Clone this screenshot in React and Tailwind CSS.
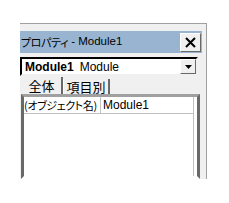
import React from "react";

const jp = "font-['Noto_Sans_CJK_JP','Noto_Sans',sans-serif]";
const lat = "font-['Liberation_Sans',sans-serif]";

export default function App() {
  return (
    <div className="w-[229px] h-[203px] bg-white pt-[23px] pl-[20px]">
      <div className="w-[187px] h-[156px] bg-[#f0f0f0] border-t border-r border-[#a0a0a0] flex flex-col">
        {/* title bar */}
        <div className="mt-[7px] h-[22px] bg-[#99b4d1] flex items-center mr-[4px]">
          <span className="whitespace-nowrap leading-none text-black pl-[1px] flex items-center">
            <span className={`${jp} text-[11px] [font-feature-settings:'palt'] tracking-[-0.4px]`}>プロパティ</span>
            <span className={`${lat} text-[11.5px] whitespace-pre`}> - Module1</span>
          </span>
          <div className="ml-auto mr-[1px] w-[21px] h-[19px] bg-[#f0f0f0] border border-t-white border-l-white border-r-[#696969] border-b-[#696969] flex items-center justify-center">
            <svg width="13" height="13" viewBox="0 0 13 13">
              <path d="M2 2 L11 11 M11 2 L2 11" stroke="black" strokeWidth="2" />
            </svg>
          </div>
        </div>
        {/* combo box */}
        <div className="mt-[4px] mr-[8px] h-[19px] bg-white border-2 border-t-[#000] border-l-[#000] border-r-[#f0f0f0] border-b-[#f0f0f0] flex items-center">
          <span className={`${lat} text-[12px] font-bold leading-none text-black pl-[3px]`}>Module1</span>
          <span className={`${lat} text-[12px] leading-none text-black pl-[6px]`}>Module</span>
          <div className="ml-auto w-[16px] h-[15px] bg-[#f0f0f0] border border-t-white border-l-white border-r-[#696969] border-b-[#696969] flex items-center justify-center">
            <svg width="7" height="4" viewBox="0 0 7 4">
              <path d="M0 0 H7 L3.5 4 Z" fill="black" />
            </svg>
          </div>
        </div>
        {/* tabs */}
        <div className="mt-[1px] h-[17px] flex items-end pl-[2px]">
          <div className={`${jp} h-[17px] w-[41px] text-[13px] leading-none flex items-center justify-center border-r-2 border-r-[#696969] text-black`}>
            全体
          </div>
          <div className={`${jp} h-[15px] w-[47px] text-[13px] leading-none flex items-center justify-center border-l border-l-white border-r-2 border-r-[#696969] text-black`}>
            項目別
          </div>
        </div>
        {/* grid */}
        <div className="flex-1 ml-[1px] mr-[6px] border-[3px] border-t-[#a0a0a0] border-l-[#696969] border-r-[#696969] border-b-transparent bg-white">
          <div className="h-full mr-[3px] border-r border-[#c0c0c0]">
            <div className="h-[17px] flex border-b border-[#c0c0c0]">
              <div className={`${jp} whitespace-nowrap overflow-hidden w-[77px] text-[11px] leading-none flex items-center border-r border-[#c0c0c0] text-black [font-feature-settings:'palt'] tracking-[-0.4px]`}>
                (オブジェクト名)
              </div>
              <div className={`${lat} text-[12px] leading-none flex items-center pl-[2px] text-black`}>
                Module1
              </div>
            </div>
          </div>
        </div>
      </div>
    </div>
  );
}
